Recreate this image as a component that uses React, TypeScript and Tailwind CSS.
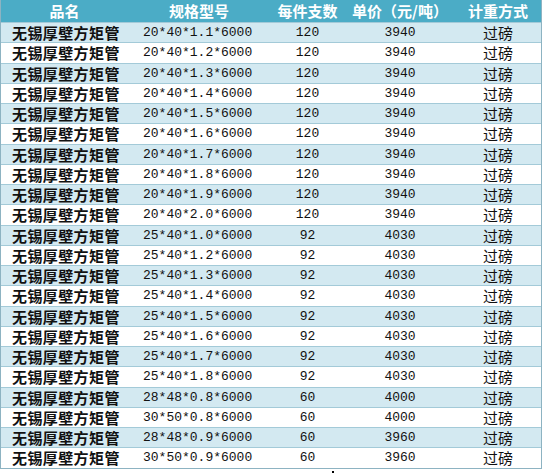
const rows: [string, string, string][] = [
  ['20*40*1.1*6000', '120', '3940'],
  ['20*40*1.2*6000', '120', '3940'],
  ['20*40*1.3*6000', '120', '3940'],
  ['20*40*1.4*6000', '120', '3940'],
  ['20*40*1.5*6000', '120', '3940'],
  ['20*40*1.6*6000', '120', '3940'],
  ['20*40*1.7*6000', '120', '3940'],
  ['20*40*1.8*6000', '120', '3940'],
  ['20*40*1.9*6000', '120', '3940'],
  ['20*40*2.0*6000', '120', '3940'],
  ['25*40*1.0*6000', '92', '4030'],
  ['25*40*1.2*6000', '92', '4030'],
  ['25*40*1.3*6000', '92', '4030'],
  ['25*40*1.4*6000', '92', '4030'],
  ['25*40*1.5*6000', '92', '4030'],
  ['25*40*1.6*6000', '92', '4030'],
  ['25*40*1.7*6000', '92', '4030'],
  ['25*40*1.8*6000', '92', '4030'],
  ['28*48*0.8*6000', '60', '4000'],
  ['30*50*0.8*6000', '60', '4000'],
  ['28*48*0.9*6000', '60', '3960'],
  ['30*50*0.9*6000', '60', '3960'],
]

const cjk = "font-['Noto_Sans_CJK_SC',sans-serif]"
const mono = "font-['Liberation_Mono','Noto_Sans_CJK_SC',monospace]"

export default function App() {
  return (
    <div className="h-[473px] w-[543px] bg-white">
      <div className="w-[542px] border-x border-b border-[#8db3c2]">
        <div className={`grid h-[22px] grid-cols-[127px_142px_75px_110px_86px] items-center bg-[#4bacc6] text-[15px] font-bold leading-[22px] text-white ${cjk}`}>
          <div className="text-center">品名</div>
          <div className="text-center">规格型号</div>
          <div className="text-center">每件支数</div>
          <div className="text-center">单价（元/吨）</div>
          <div className="text-center">计重方式</div>
        </div>
        {rows.map(([spec, count, price], i) => (
          <div
            key={i}
            className={`grid h-[20.25px] grid-cols-[127px_142px_75px_110px_86px] items-center border-t border-[#a3cad8] leading-none text-[#111] ${i % 2 === 0 ? 'bg-[#d3e9f1]' : 'bg-white'}`}
          >
            <div className={`pl-[11px] text-[15px] font-bold tracking-[0.4px] ${cjk}`}>无锡厚壁方矩管</div>
            <div className={`pl-[15px] text-[13px] ${mono}`}>{spec}</div>
            <div className={`text-center text-[13px] ${mono}`}>{count}</div>
            <div className={`text-center text-[13px] ${mono}`}>{price}</div>
            <div className={`text-center text-[15px] ${cjk}`}>过磅</div>
          </div>
        ))}
      </div>
      <div className="ml-[332px] mt-[2px] h-[2px] w-[2px] bg-black" />
    </div>
  )
}
